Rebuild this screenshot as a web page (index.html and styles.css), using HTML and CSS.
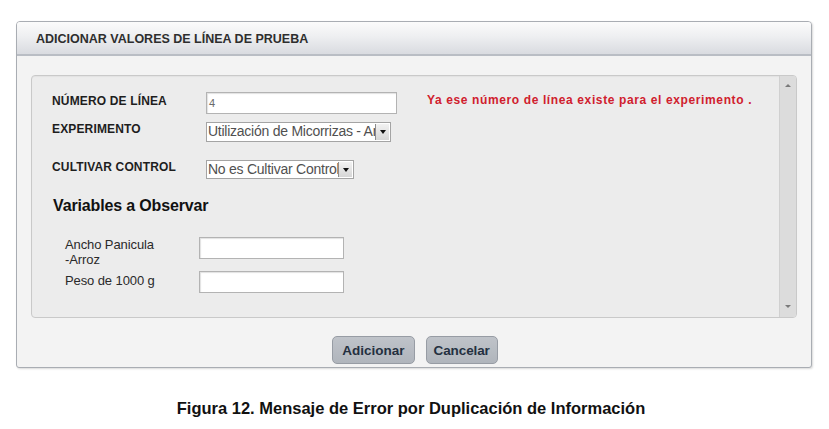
FILE: index.html
```html
<!DOCTYPE html>
<html lang="es">
<head>
<meta charset="utf-8">
<title>Adicionar valores de línea de prueba</title>
<link rel="stylesheet" href="styles.css">
</head>
<body>
<div class="page">
  <div class="dialog">
    <div class="dialog-header">ADICIONAR VALORES DE LÍNEA DE PRUEBA</div>
    <div class="dialog-body">
      <div class="panel">
        <div class="panel-content">
          <div class="row row-first">
            <div class="label label-first">NÚMERO DE LÍNEA</div>
            <div class="input input-line">4</div>
            <div class="error">Ya ese número de línea existe para el experimento .</div>
          </div>
          <div class="row row-exp">
            <div class="label">EXPERIMENTO</div>
            <div class="select select-exp">
              <span class="select-text">Utilización de Micorrizas - Arroz</span>
              <span class="select-btn"><span class="tri-down"></span></span>
            </div>
          </div>
          <div class="row row-cult">
            <div class="label">CULTIVAR CONTROL</div>
            <div class="select select-cult">
              <span class="select-text">No es Cultivar Control</span>
              <span class="select-btn"><span class="tri-down"></span></span>
            </div>
          </div>
          <div class="section-title">Variables a Observar</div>
          <div class="var-row var-row-first">
            <div class="var-label">Ancho Panicula<br>-Arroz</div>
            <div class="input input-var"></div>
          </div>
          <div class="var-row var-row-second">
            <div class="var-label var-label-single">Peso de 1000 g</div>
            <div class="input input-var"></div>
          </div>
        </div>
        <div class="scrollbar">
          <span class="tri-up-small"></span>
          <span class="tri-down-small"></span>
        </div>
      </div>
      <div class="actions">
        <button class="btn">Adicionar</button>
        <button class="btn btn-cancel">Cancelar</button>
      </div>
    </div>
  </div>
  <div class="caption">Figura 12. Mensaje de Error por Duplicación de Información</div>
</div>
</body>
</html>
```

FILE: styles.css
```css
* { box-sizing: border-box; }
html, body {
  margin: 0;
  padding: 0;
  background: #ffffff;
  font-family: "Liberation Sans", Arial, sans-serif;
}
.page {
  width: 829px;
  height: 429px;
  padding: 21px 0 0 16px;
}
.dialog {
  width: 796px;
  height: 347px;
  border: 1px solid #a9adb3;
  border-radius: 4px 4px 3px 3px;
  background: #f3f3f3;
  box-shadow: 1px 1px 2px rgba(0,0,0,0.15);
  overflow: hidden;
}
.dialog-header {
  height: 34px;
  padding: 9px 0 0 19px;
  font-size: 12.5px;
  line-height: 16px;
  font-weight: bold;
  color: #2e2e2e;
  background: linear-gradient(#fbfbfb 0%, #eeeff1 45%, #d9dbe0 100%);
  border-bottom: 2px solid #b9bdc4;
}
.dialog-body {
  padding: 19px 14px 0 14px;
}
.panel {
  height: 243px;
  display: flex;
  border: 1px solid #c9c9c9;
  border-radius: 4px;
  background: #ececec;
  box-shadow: inset 0 1px 1px rgba(0,0,0,0.04);
}
.panel-content {
  flex: 1;
  padding: 16px 0 0 20px;
}
.row {
  display: flex;
  align-items: flex-start;
}
.row-exp { margin-top: 8px; }
.row-cult { margin-top: 18px; }
.label {
  width: 154px;
  font-size: 12px;
  font-weight: bold;
  line-height: 14px;
  color: #1e1e1e;
  letter-spacing: 0.15px;
}
.label-first { padding-top: 2px; }
.input {
  background: #ffffff;
  border: 1px solid #b3b3b3;
  box-shadow: inset 1px 1px 1px rgba(0,0,0,0.12);
}
.input-line {
  width: 191px;
  height: 22px;
  font-size: 11px;
  color: #6a6a6a;
  padding: 4px 0 0 2px;
}
.error {
  margin-left: 30px;
  padding-top: 1px;
  font-size: 12px;
  font-weight: bold;
  color: #d0202e;
  line-height: 14px;
  letter-spacing: 0.62px;
  white-space: nowrap;
}
.select {
  display: flex;
  background: #ffffff;
  border: 1px solid #a4a4a4;
  overflow: hidden;
}
.select-exp { width: 185px; height: 20px; }
.select-cult { width: 148px; height: 19px; }
.select-text {
  flex: 1;
  min-width: 0;
  overflow: hidden;
  white-space: nowrap;
  font-size: 14px;
  line-height: 17px;
  color: #505050;
  padding-left: 1px;
  letter-spacing: -0.25px;
}
.select-btn {
  width: 14px;
  flex: none;
  display: flex;
  align-items: center;
  justify-content: center;
  background: linear-gradient(#f2f2f2, #d6d6d6);
  border-left: 1px solid #8d8d8d;
  margin: 1px 1px 1px 0;
}
.tri-down {
  width: 0;
  height: 0;
  border-left: 3px solid transparent;
  border-right: 3px solid transparent;
  border-top: 4px solid #111111;
}
.section-title {
  margin-top: 18px;
  padding-left: 1px;
  font-size: 16px;
  font-weight: bold;
  color: #111111;
  line-height: 18px;
  letter-spacing: -0.15px;
}
.var-row {
  display: flex;
  align-items: flex-start;
  height: 22px;
}
.var-row-first { margin-top: 22px; }
.var-row-second { margin-top: 12px; }
.var-label {
  width: 147px;
  padding-left: 13px;
  font-size: 13px;
  line-height: 15px;
  color: #2a2a2a;
  letter-spacing: -0.1px;
}
.var-label-single { padding-top: 2px; }
.input-var {
  width: 145px;
  height: 22px;
}
.scrollbar {
  width: 17px;
  flex: none;
  background: #dcdcdc;
  border-left: 1px solid #d0d0d0;
  display: flex;
  flex-direction: column;
  justify-content: space-between;
  align-items: center;
  padding: 8px 0 9px 0;
  border-radius: 0 3px 3px 0;
}
.tri-up-small {
  width: 0;
  height: 0;
  border-left: 3px solid transparent;
  border-right: 3px solid transparent;
  border-bottom: 3px solid #7a7a7a;
}
.tri-down-small {
  width: 0;
  height: 0;
  border-left: 3px solid transparent;
  border-right: 3px solid transparent;
  border-top: 3px solid #7a7a7a;
}
.actions {
  display: flex;
  justify-content: center;
  gap: 11px;
  margin-top: 18px;
  padding-left: 2px;
}
.btn {
  height: 28px;
  padding: 0 9px;
  font-family: "Liberation Sans", Arial, sans-serif;
  font-size: 13.5px;
  font-weight: bold;
  color: #243040;
  background: linear-gradient(#bfc3c9, #b0b5bc);
  border: 1px solid #979ca4;
  border-radius: 5px;
}
.btn-cancel {
  padding: 0 7px;
  letter-spacing: -0.1px;
}
.caption {
  margin-top: 31px;
  text-align: center;
  font-size: 16.5px;
  font-weight: bold;
  color: #111111;
  padding-right: 23px;
}
```
